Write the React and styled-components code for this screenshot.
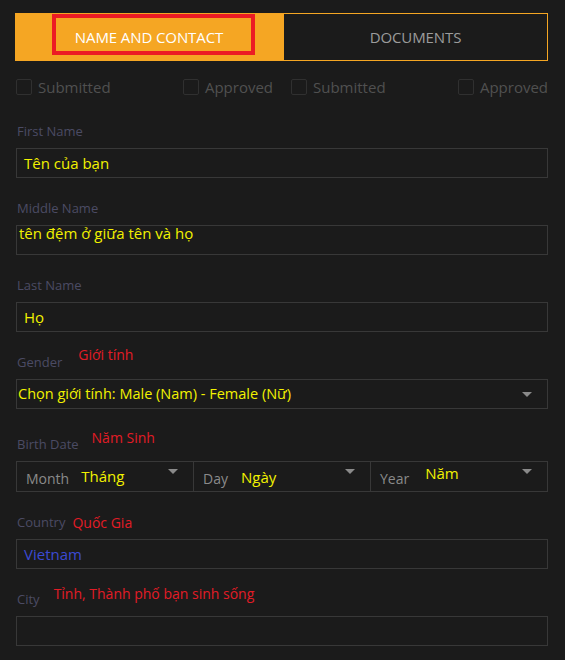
import React from "react";
import styled, { createGlobalStyle } from "styled-components";

const GlobalStyle = createGlobalStyle`
  html, body {
    margin: 0;
    background: #1b1b1b;
    font-family: "Open Sans", "Liberation Sans", sans-serif;
  }
`;

const Page = styled.div`
  padding: 13px 17px 20px 16px;
  width: 565px;
  box-sizing: border-box;
`;

const Tabs = styled.div`
  display: flex;
  height: 48px;
  margin-left: -1px;
`;

const Tab = styled.div`
  position: relative;
  display: flex;
  align-items: center;
  justify-content: center;
  box-sizing: border-box;
  font-size: 15px;
  letter-spacing: -0.1px;
  ${(p) =>
    p.$active
      ? `width: 268px; background: #f5a623; color: #fff;`
      : `flex: 1; border: 1px solid #f5a623; color: #9c9c9c;`}
`;

const Highlight = styled.span`
  position: absolute;
  left: 37px;
  top: 1px;
  width: 203px;
  height: 41px;
  box-sizing: border-box;
  border: 4px solid #ec1c24;
`;

const Checks = styled.div`
  display: grid;
  grid-template-columns: 1fr 1fr;
  column-gap: 18px;
  margin: 16px 0 25px;
  height: 20px;
`;

const CheckGroup = styled.div`
  display: flex;
  justify-content: space-between;
  align-items: center;
`;

const Check = styled.label`
  display: flex;
  align-items: center;
  gap: 6px;
  color: #505050;
  font-size: 15px;
`;

const Box = styled.span`
  width: 16px;
  height: 16px;
  box-sizing: border-box;
  border: 1px solid #303030;
  border-radius: 2px;
`;

const Field = styled.div`
  margin-bottom: ${(p) => p.$gap || 21}px;
`;

const LabelRow = styled.div`
  display: flex;
  align-items: center;
  height: 17px;
  margin-bottom: 9px;
  padding-left: 1px;
`;

const Label = styled.span`
  font-size: 13px;
  color: #4b4b64;
`;

const Note = styled.span`
  position: relative;
  top: ${(p) => p.$dy || 0}px;
  margin-left: ${(p) => p.$dx || 0}px;
  font-size: 14px;
  color: #e21c26;
  white-space: nowrap;
`;

const Input = styled.div`
  display: flex;
  align-items: ${(p) => (p.$top ? "flex-start" : "center")};
  height: ${(p) => p.$h || 30}px;
  box-sizing: border-box;
  border: 1px solid #383838;
  padding-left: ${(p) => (p.$pl != null ? p.$pl : 7)}px;
  padding-right: 15px;
  font-size: ${(p) => p.$size || 15}px;
  line-height: ${(p) => (p.$top ? 15 : 18)}px;
  color: ${(p) => p.$color || "#f2f200"};
  white-space: nowrap;
`;

const Caret = styled.span`
  margin-left: auto;
  width: 0;
  height: 0;
  border-left: 5px solid transparent;
  border-right: 5px solid transparent;
  border-top: 5px solid #8a8a8a;
`;

const DateRow = styled.div`
  display: flex;
`;

const DatePart = styled.div`
  flex: 1;
  display: flex;
  align-items: center;
  height: 31px;
  box-sizing: border-box;
  border: 1px solid #383838;
  margin-left: -1px;
  padding: 0 15px 0 9px;
  &:first-child {
    margin-left: 0;
  }
`;

const PartLabel = styled.span`
  position: relative;
  top: 2px;
  font-size: 14px;
  color: #8a8a8a;
`;

const PartValue = styled.span`
  position: relative;
  top: ${(p) => p.$dy || 0}px;
  margin-left: ${(p) => p.$dx || 13}px;
  font-size: 15px;
  color: #f2f200;
`;

const PartCaret = styled(Caret)`
  position: relative;
  top: -5px;
`;

const dateParts = [
  { label: "Month", value: "Tháng", dx: 12, dy: -1 },
  { label: "Day", value: "Ngày", dx: 13, dy: 0 },
  { label: "Year", value: "Năm", dx: 16, dy: -4 },
];

export default function App() {
  return (
    <Page>
      <GlobalStyle />
      <Tabs>
        <Tab $active>
          NAME AND CONTACT
          <Highlight />
        </Tab>
        <Tab>DOCUMENTS</Tab>
      </Tabs>

      <Checks>
        <CheckGroup>
          <Check><Box />Submitted</Check>
          <Check><Box />Approved</Check>
        </CheckGroup>
        <CheckGroup>
          <Check><Box />Submitted</Check>
          <Check><Box />Approved</Check>
        </CheckGroup>
      </Checks>

      <Field>
        <LabelRow><Label>First Name</Label></LabelRow>
        <Input>Tên của bạn</Input>
      </Field>

      <Field>
        <LabelRow><Label>Middle Name</Label></LabelRow>
        <Input $top $pl={2}>tên đệm ở giữa tên và họ</Input>
      </Field>

      <Field>
        <LabelRow><Label>Last Name</Label></LabelRow>
        <Input>Họ</Input>
      </Field>

      <Field $gap={26}>
        <LabelRow>
          <Label>Gender</Label>
          <Note $dx={16} $dy={-7}>Giới tính</Note>
        </LabelRow>
        <Input $pl={1} $size={14.5}>
          Chọn giới tính: Male (Nam) - Female (Nữ)
          <Caret />
        </Input>
      </Field>

      <Field>
        <LabelRow>
          <Label>Birth Date</Label>
          <Note $dx={13} $dy={-6}>Năm Sinh</Note>
        </LabelRow>
        <DateRow>
          {dateParts.map((d) => (
            <DatePart key={d.label}>
              <PartLabel>{d.label}</PartLabel>
              <PartValue $dx={d.dx} $dy={d.dy}>{d.value}</PartValue>
              <PartCaret />
            </DatePart>
          ))}
        </DateRow>
      </Field>

      <Field>
        <LabelRow>
          <Label>Country</Label>
          <Note $dx={7} $dy={1}>Quốc Gia</Note>
        </LabelRow>
        <Input $color="#3b4ad2">Vietnam</Input>
      </Field>

      <Field>
        <LabelRow>
          <Label>City</Label>
          <Note $dx={14} $dy={-5}>Tỉnh, Thành phố bạn sinh sống</Note>
        </LabelRow>
        <Input />
      </Field>
    </Page>
  );
}
